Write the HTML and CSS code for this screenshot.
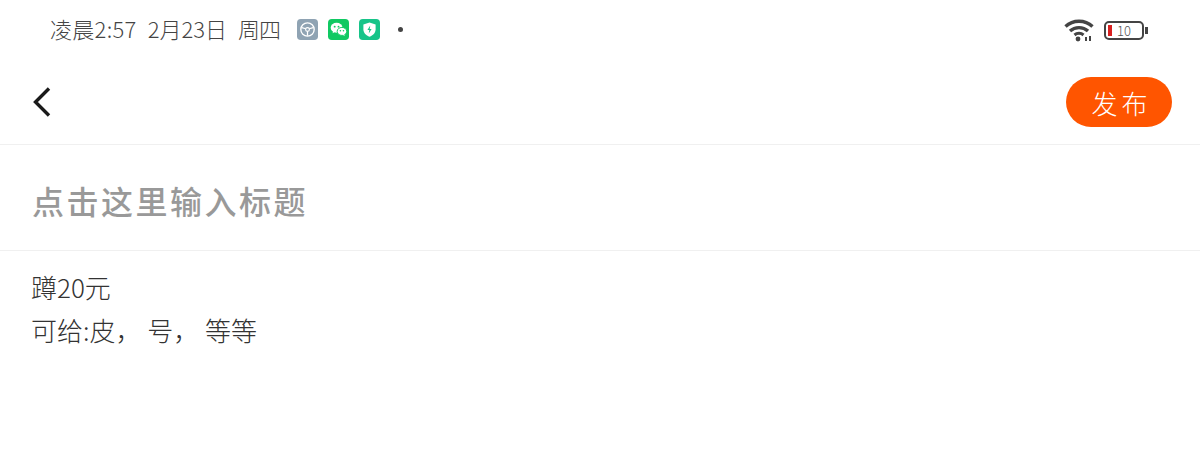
FILE: index.html
```html
<!DOCTYPE html>
<html lang="zh-CN">

<head>
    <meta charset="UTF-8">
    <meta name="viewport" content="width=device-width, initial-scale=1.0">
    <title>发布</title>
    <link rel="stylesheet" href="styles.css">
</head>

<body>
    <div class="status-bar">
        <div class="status-left">
            <span class="status-time">凌晨2:57</span>
            <span class="status-date">2月23日</span>
            <span class="status-week">周四</span>
            <div class="status-icons">
                <svg class="app-icon" viewBox="0 0 22 22">
                    <rect width="22" height="22" rx="4" fill="#8fa3b3" />
                    <circle cx="11" cy="11" r="7" fill="none" stroke="#fff" stroke-width="1.4" />
                    <circle cx="11" cy="11" r="2" fill="none" stroke="#fff" stroke-width="1.2" />
                    <path d="M5 9l4.2 1.2M17 9l-4.2 1.2M11 13v4.5" stroke="#fff" stroke-width="1.3" fill="none" />
                </svg>
                <svg class="app-icon" viewBox="0 0 22 22">
                    <rect width="22" height="22" rx="4" fill="#10c962" />
                    <ellipse cx="9" cy="9.2" rx="6.200" ry="5.200" fill="#fff" />
                    <path d="M5.6 12l-.8 2.800 3.200-1.600z" fill="#fff" />
                    <ellipse cx="14.6" cy="13" rx="5" ry="4.200" fill="#fff" stroke="#10c962" stroke-width="1" />
                    <path d="M16.6 15.6l1.400 2-3.200-1.200z" fill="#fff" />
                    <circle cx="7" cy="8" r="1" fill="#10c962" />
                    <circle cx="11" cy="8" r="1" fill="#10c962" />
                    <circle cx="13" cy="12.400" r=".8" fill="#10c962" />
                    <circle cx="16.200" cy="12.400" r=".8" fill="#10c962" />
                </svg>
                <svg class="app-icon" viewBox="0 0 22 22">
                    <rect width="22" height="22" rx="4" fill="#17c489" />
                    <path d="M11 3.600l6.400 2.200v5c0 4-2.800 6.400-6.400 7.800-3.600-1.400-6.400-3.800-6.400-7.800v-5z" fill="#fff" />
                    <path d="M11.800 6.800l-3 4.600h2l-.6 3.800 3-4.800h-2z" fill="#17c489" />
                </svg>
            </div>
            <span class="status-dot"></span>
        </div>
        <div class="status-right">
            <svg class="wifi" viewBox="0 0 30 24">
                <path d="M1.500 8.500C9 1.500 21 1.500 28.500 8.500" fill="none" stroke="#444" stroke-width="3.400" />
                <path d="M6 13c5-4.500 13-4.500 18 0" fill="none" stroke="#444" stroke-width="3.400" />
                <path d="M10.500 17c2.500-2.200 6.500-2.200 9 0" fill="none" stroke="#444" stroke-width="3" />
                <circle cx="14" cy="21" r="2.400" fill="#444" />
                <path d="M22 23v-4M26 23v-5" stroke="#444" stroke-width="2" fill="none" />
            </svg>
            <div class="battery">
                <div class="battery-body">
                    <span class="battery-level"></span>
                    <span class="battery-num">10</span>
                </div>
                <span class="battery-cap"></span>
            </div>
        </div>
    </div>

    <div class="header">
        <svg class="back" viewBox="0 0 20 32">
            <path d="M17 2.500L3.500 16 17 29.500" fill="none" stroke="#1a1a1a" stroke-width="3.400" />
        </svg>
        <button class="publish">发布</button>
    </div>

    <div class="title-row">点击这里输入标题</div>

    <div class="content">
        <p>蹲20元</p>
        <p>可给:皮， 号， 等等</p>
    </div>
</body>

</html>
```

FILE: styles.css
```css
body {
    margin: 0;
    background: #fff;
    font-family: "Noto Sans CJK SC", "Noto Sans", sans-serif;
    overflow: hidden;
}

.status-bar {
    height: 60px;
    display: flex;
    justify-content: space-between;
    align-items: center;
    padding: 0 52px 0 50px;
}

.status-left {
    display: flex;
    align-items: center;
    margin-bottom: 2px;
    font-size: 22px;
    font-weight: 300;
    color: #444;
}

.status-left span {
    margin-bottom: 2px;
}

.status-time {
    letter-spacing: .3px;
}

.status-date {
    margin-left: 11px;
}

.status-week {
    margin-left: 11px;
    letter-spacing: -1px;
}

.status-icons {
    display: flex;
    gap: 10px;
    margin-left: 17px;
}

.app-icon {
    width: 21px;
    height: 21px;
    display: block;
}

.status-left .status-dot {
    width: 5px;
    height: 5px;
    border-radius: 50%;
    background: #444;
    margin: 0 0 0 18px;
}

.status-right {
    display: flex;
    align-items: center;
    gap: 10px;
}

.wifi {
    width: 30px;
    height: 24px;
    display: block;
}

.battery {
    display: flex;
    align-items: center;
}

.battery-body {
    width: 40px;
    height: 19px;
    box-sizing: border-box;
    border: 2px solid #444;
    border-radius: 5px;
    display: flex;
    align-items: center;
    padding-left: 2px;
}

.battery-level {
    width: 4px;
    height: 11px;
    background: #d8201f;
}

.battery-num {
    font-size: 13px;
    font-weight: 300;
    line-height: 1;
    color: #555;
    margin-left: 5px;
}

.battery-cap {
    width: 3px;
    height: 7px;
    background: #444;
    margin-left: 1px;
}

.header {
    height: 84px;
    display: flex;
    justify-content: space-between;
    align-items: center;
    padding: 0 28px 0 32px;
    border-bottom: 1px solid #f0f0f0;
}

.back {
    width: 20px;
    height: 32px;
    display: block;
}

.publish {
    width: 106px;
    height: 50px;
    border: none;
    border-radius: 25px;
    background: #ff5500;
    color: #fff;
    font-family: inherit;
    font-size: 26px;
    font-weight: 300;
    letter-spacing: 4px;
    padding: 0 0 0 5px;
}

.title-row {
    height: 106px;
    box-sizing: border-box;
    display: flex;
    align-items: center;
    padding: 4px 0 0 32px;
    font-size: 32px;
    font-weight: 500;
    letter-spacing: 2.500px;
    color: #999;
    border-bottom: 1px solid #f0f0f0;
}

.content {
    padding: 14px 0 0 31px;
    font-size: 26px;
    font-weight: 300;
    line-height: 43px;
    color: #333;
}

.content p {
    margin: 0;
}
```
